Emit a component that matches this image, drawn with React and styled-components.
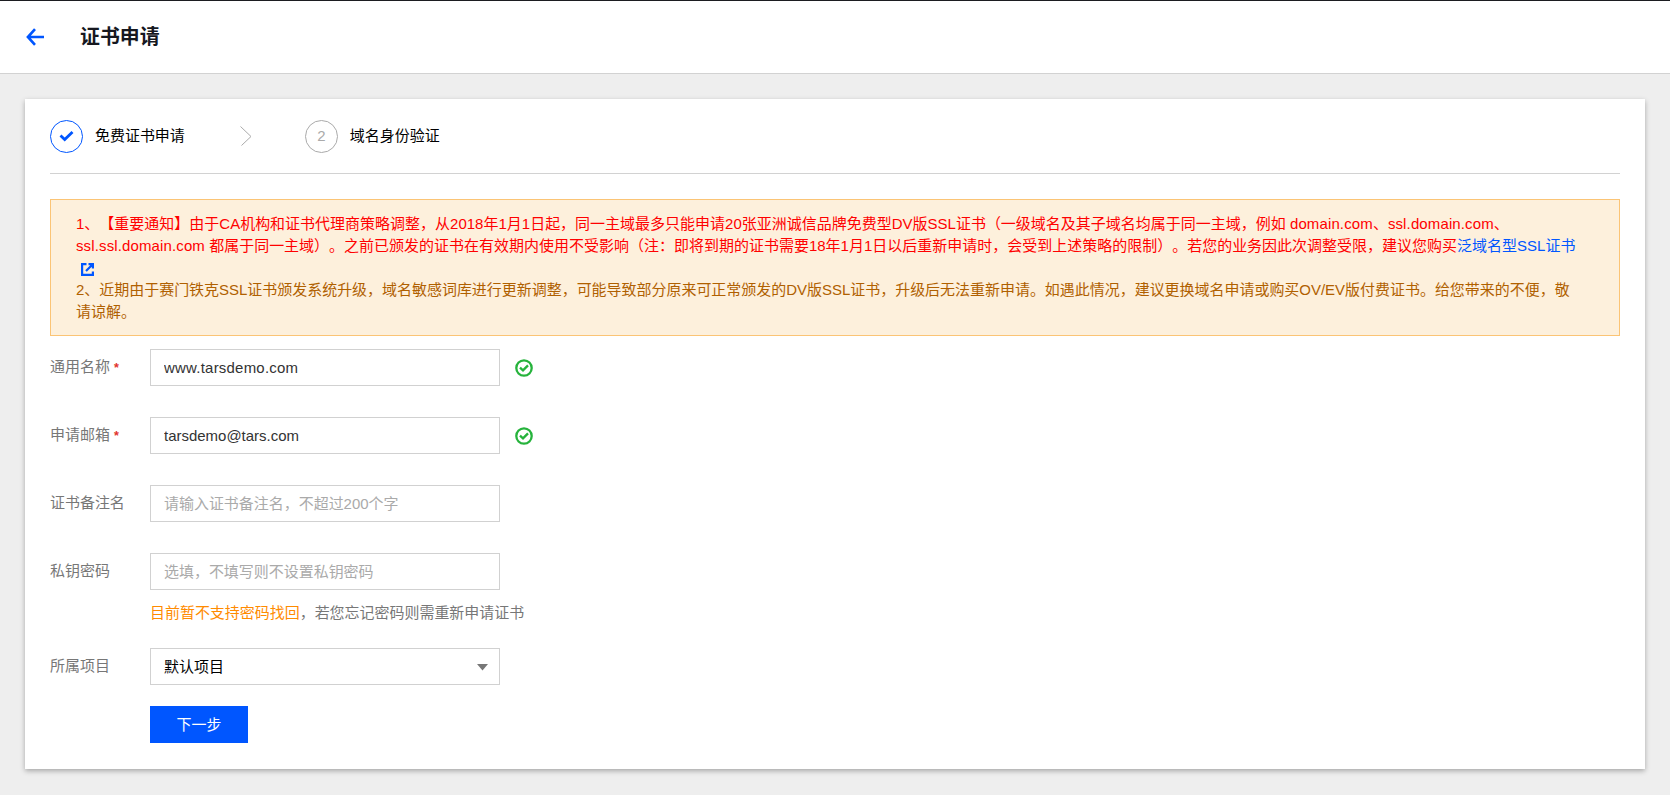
import React from "react";
import styled, { createGlobalStyle } from "styled-components";

const Global = createGlobalStyle`
  * { box-sizing: border-box; }
  body {
    margin: 0;
    background: #eee;
    color: #000;
    font: 14.97px/22px "Liberation Sans", "Noto Sans CJK SC", sans-serif;
    text-spacing-trim: space-all;
  }
  input, select, button { font: inherit; letter-spacing: inherit; }
`;

const Page = styled.div`
  height: 795px;
  padding-bottom: 1px;
  overflow: hidden;
  border-top: 1px solid #1c1d21;
`;

const Header = styled.header`
  display: flex;
  align-items: center;
  gap: 36px;
  height: 73px;
  padding-left: 26px;
  background: #fff;
  border-bottom: 1px solid #d2d2d2;
`;

const Title = styled.h1`
  margin: 0;
  font-size: 19.9px;
  line-height: 30px;
  color: #16181f;
`;

const Card = styled.main`
  height: 670px;
  margin: 25px 25px 0;
  padding: 0 25px;
  background: #fff;
  box-shadow: 0 2px 5px rgba(0, 0, 0, 0.3);
`;

const Steps = styled.div`
  display: flex;
  align-items: center;
  height: 75px;
  border-bottom: 1px solid #d2d2d2;
`;

const StepMark = styled.span`
  display: flex;
  align-items: center;
  justify-content: center;
  width: 33px;
  height: 33px;
  margin-right: 12px;
  border: 1px solid ${(p) => (p.$done ? "#0056ff" : "#aaa")};
  border-radius: 50%;
  color: #aaa;
`;

const StepChevron = styled.svg`
  margin: 0 53px 0 55px;
`;

const Notice = styled.section`
  height: 137px;
  margin-top: 25px;
  padding: 13px 30px 0 25px;
  background: #fdf0dc;
  border: 1px solid #fbc475;
  color: #b06000;
`;

const NoticeText = styled.p`
  margin: 0;
  color: ${(p) => (p.$important ? "#ff0000" : "inherit")};
  letter-spacing: ${(p) => (p.$important ? 0.025 : 0)}px;
`;

const Domain = styled.span`
  letter-spacing: 0.14px;
`;

const NoticeLink = styled.a`
  color: #0056ff;
  text-decoration: none;
  svg { margin-left: 5px; vertical-align: -3px; }
`;

const Form = styled.form`
  padding-top: 13px;
`;

const Row = styled.div`
  display: flex;
  height: ${(p) => p.$height || 68}px;
`;

const Label = styled.label`
  width: 100px;
  line-height: 36px;
  color: #777;
`;

const Required = styled.span`
  margin-left: 4px;
  font-size: 12.5px;
  font-weight: bold;
  color: #e1322d;
`;

const TextInput = styled.input`
  width: 350px;
  height: 37px;
  padding: 0 13px 1px;
  border: 1px solid #d1d1d1;
  background: #fff;
  color: #333;
  letter-spacing: ${(p) => p.$tracking || 0}px;
  &::placeholder { color: #aaa; opacity: 1; }
`;

const ValidMark = styled.svg`
  margin: 10px 0 0 15px;
`;

const Help = styled.p`
  margin: 12px 0 0;
  color: #777;
`;

const Emphasis = styled.span`
  color: #ff8b00;
`;

const Select = styled.div`
  display: flex;
  align-items: center;
  justify-content: space-between;
  width: 350px;
  height: 37px;
  padding: 1px 11px 0 13px;
  border: 1px solid #d1d1d1;
`;

const Submit = styled.button`
  width: 98px;
  height: 37px;
  margin-left: 100px;
  padding: 1px 0 0;
  border: 0;
  background: #0056ff;
  color: #fff;
`;

const Field = ({ label, required, valid, height, help, tracking, ...input }) => (
  <Row $height={height}>
    <Label>{label}{required && <Required>*</Required>}</Label>
    <div>
      <TextInput $tracking={tracking} {...input} />
      {help}
    </div>
    {valid && (
      <ValidMark width="18" height="18" viewBox="0 0 18 18" fill="none" stroke="#26b33c" strokeWidth="2.3">
        <circle cx="9" cy="9" r="7.7" />
        <path d="M5 8.6 8 11.4 13 6.4" />
      </ValidMark>
    )}
  </Row>
);

export default function App() {
  return (
    <Page>
      <Global />
      <Header>
        <svg width="18" height="18" viewBox="0 0 18 18" fill="none" stroke="#0056ff" strokeWidth="2.6">
          <path d="M9 1.2 1.9 9 9 16.8M2 9h16" />
        </svg>
        <Title>证书申请</Title>
      </Header>
      <Card>
        <Steps>
          <StepMark $done>
            <svg width="15" height="12" viewBox="0 0 15 12" fill="none" stroke="#0056ff" strokeWidth="2.8">
              <path d="M1.5 5.5 5.7 9.5 13.5 2" />
            </svg>
          </StepMark>
          <span>免费证书申请</span>
          <StepChevron width="12" height="20" viewBox="0 0 12 20" fill="none" stroke="#aaa">
            <path d="M.5 .5 11 10.5 1.5 19.5" />
          </StepChevron>
          <StepMark>2</StepMark>
          <span>域名身份验证</span>
        </Steps>
        <Notice>
          <NoticeText $important>
            1、【重要通知】由于CA机构和证书代理商策略调整，从2018年1月1日起，同一主域最多只能申请20张亚洲诚信品牌免费型DV版SSL证书（一级域名及其子域名均属于同一主域，例如 <Domain>domain.com</Domain>、<Domain>ssl.domain.com</Domain>、<br />
            <Domain>ssl.ssl.domain.com</Domain> 都属于同一主域）。之前已颁发的证书在有效期内使用不受影响（注：即将到期的证书需要18年1月1日以后重新申请时，会受到上述策略的限制）。若您的业务因此次调整受限，建议您购买
            <NoticeLink href="#">泛域名型SSL证书<br />
              <svg width="13" height="13" viewBox="0 0 13 13" fill="none" stroke="#0056ff" strokeWidth="2.2">
                <path d="M5.5 1.1H1.1v10.8h10.8V8.5M7.5 1.1H11.9v4.4M11.5 1.5 5 8" />
              </svg>
            </NoticeLink>
          </NoticeText>
          <NoticeText>
            2、近期由于赛门铁克SSL证书颁发系统升级，域名敏感词库进行更新调整，可能导致部分原来可正常颁发的DV版SSL证书，升级后无法重新申请。如遇此情况，建议更换域名申请或购买OV/EV版付费证书。给您带来的不便，敬<br />
            请谅解。
          </NoticeText>
        </Notice>
        <Form>
          <Field label="通用名称" required valid tracking={0.23} defaultValue="www.tarsdemo.com" />
          <Field label="申请邮箱" required valid defaultValue="tarsdemo@tars.com" />
          <Field label="证书备注名" placeholder="请输入证书备注名，不超过200个字" />
          <Field
            label="私钥密码"
            height={95}
            placeholder="选填，不填写则不设置私钥密码"
            help={<Help><Emphasis>目前暂不支持密码找回</Emphasis>，若您忘记密码则需重新申请证书</Help>}
          />
          <Row $height={58}>
            <Label>所属项目</Label>
            <Select>
              <span>默认项目</span>
              <svg width="11" height="7" viewBox="0 0 11 7" fill="#777"><path d="M0 0h11L5.5 6.5z" /></svg>
            </Select>
          </Row>
          <Submit type="button">下一步</Submit>
        </Form>
      </Card>
    </Page>
  );
}
